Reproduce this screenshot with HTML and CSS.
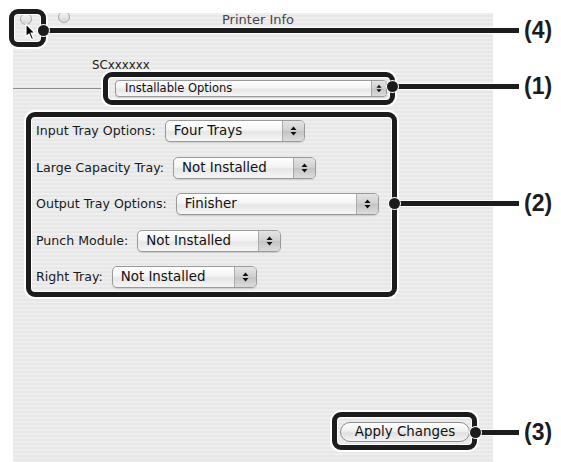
FILE: index.html
```html
<!DOCTYPE html>
<html>
<head>
<meta charset="utf-8">
<title>Printer Info</title>
<link rel="stylesheet" href="styles.css">
</head>
<body>
<div class="stage">
  <div class="window">
    <div class="titlebar">
      <span class="light"></span>
      <span class="light light-2"></span>
      <span class="title">Printer Info</span>
    </div>
    <div class="printer-name">SCxxxxxx</div>
    <div class="panel-row">
      <span class="separator"></span>
      <div class="popup popup-small">
        <span class="popup-text">Installable Options</span>
        <span class="arrows"><svg width="7" height="10" viewBox="0 0 7 10"><polygon points="0.5,4 3.5,0.5 6.5,4"/><polygon points="0.5,6 3.5,9.5 6.5,6"/></svg></span>
      </div>
    </div>
    <div class="options">
      <div class="opt-row">
        <span class="opt-label">Input Tray Options:</span>
        <div class="popup w-140"><span class="popup-text">Four Trays</span><span class="arrows"><svg width="7" height="10" viewBox="0 0 7 10"><polygon points="0.5,4 3.5,0.5 6.5,4"/><polygon points="0.5,6 3.5,9.5 6.5,6"/></svg></span></div>
      </div>
      <div class="opt-row">
        <span class="opt-label">Large Capacity Tray:</span>
        <div class="popup w-143"><span class="popup-text">Not Installed</span><span class="arrows"><svg width="7" height="10" viewBox="0 0 7 10"><polygon points="0.5,4 3.5,0.5 6.5,4"/><polygon points="0.5,6 3.5,9.5 6.5,6"/></svg></span></div>
      </div>
      <div class="opt-row">
        <span class="opt-label">Output Tray Options:</span>
        <div class="popup w-203"><span class="popup-text">Finisher</span><span class="arrows"><svg width="7" height="10" viewBox="0 0 7 10"><polygon points="0.5,4 3.5,0.5 6.5,4"/><polygon points="0.5,6 3.5,9.5 6.5,6"/></svg></span></div>
      </div>
      <div class="opt-row">
        <span class="opt-label">Punch Module:</span>
        <div class="popup w-144"><span class="popup-text">Not Installed</span><span class="arrows"><svg width="7" height="10" viewBox="0 0 7 10"><polygon points="0.5,4 3.5,0.5 6.5,4"/><polygon points="0.5,6 3.5,9.5 6.5,6"/></svg></span></div>
      </div>
      <div class="opt-row">
        <span class="opt-label">Right Tray:</span>
        <div class="popup w-145"><span class="popup-text">Not Installed</span><span class="arrows"><svg width="7" height="10" viewBox="0 0 7 10"><polygon points="0.5,4 3.5,0.5 6.5,4"/><polygon points="0.5,6 3.5,9.5 6.5,6"/></svg></span></div>
      </div>
    </div>
    <div class="footer">
      <button class="apply">Apply Changes</button>
    </div>
  </div>

  <div class="leader leader-4"></div>
  <div class="leader leader-1"></div>
  <div class="leader leader-2"></div>
  <div class="leader leader-3"></div>

  <div class="callout-box box-4"></div>
  <div class="callout-box box-1"></div>
  <div class="callout-box box-2"></div>
  <div class="callout-box box-3"></div>

  <svg class="cursor" width="12" height="18" viewBox="0 0 12 18"><path d="M1 1 L1 14 L4 11 L6.5 16.5 L8.5 15.5 L6 10 L10 10 Z" fill="#000" stroke="#fff" stroke-width="1.2" stroke-linejoin="round"/></svg>

  <div class="dot dot-4"></div>
  <div class="dot dot-1"></div>
  <div class="dot dot-2"></div>
  <div class="dot dot-3"></div>

  <span class="label label-4">(4)</span>
  <span class="label label-1">(1)</span>
  <span class="label label-2">(2)</span>
  <span class="label label-3">(3)</span>
</div>
</body>
</html>
```
FILE: styles.css
```css
* { box-sizing: border-box; }
html, body { margin: 0; padding: 0; background: #fff; }
body { font-family: "DejaVu Sans", "Noto Sans", sans-serif; color: #1a1a1a; }

.stage {
  position: relative;
  width: 561px;
  height: 462px;
  overflow: hidden;
}

.window {
  margin: 13px 0 0 13px;
  width: 480px;
  height: 449px;
  display: flex;
  flex-direction: column;
  overflow: hidden;
  background: repeating-linear-gradient(to bottom, #eeeeee 0 2px, #e7e7e7 2px 4px);
}

.titlebar {
  height: 17px;
  display: flex;
  align-items: flex-start;
  flex: none;
}
.light {
  width: 12px;
  height: 12px;
  border-radius: 50%;
  border: 1px solid #a8a8a8;
  background: linear-gradient(#f4f4f4, #d8d8d8);
  margin: 0 0 0 7px;
  flex: none;
}
.light-2 { margin-left: 26px; margin-top: -2px; }
.title {
  margin: -1px 0 0 152px;
  font-size: 13px;
  color: #444;
  line-height: 16px;
  white-space: nowrap;
}

.printer-name {
  margin: 27px 0 0 79px;
  font-size: 11.8px;
  line-height: 16px;
  color: #222;
}

.panel-row {
  display: flex;
  align-items: center;
  margin-top: 7px;
}
.separator {
  width: 90px;
  height: 1px;
  background: #8e8e8e;
  margin-right: 12px;
}

.popup {
  display: flex;
  align-items: stretch;
  height: 22px;
  border: 1px solid #9a9a9a;
  border-radius: 5px;
  background: linear-gradient(#ffffff 0%, #f4f4f4 45%, #e6e6e6 55%, #f6f6f6 100%);
  box-shadow: 0 1px 1px rgba(0,0,0,0.12);
  overflow: hidden;
  flex: none;
}
.popup-text {
  flex: 1;
  padding-left: 8px;
  font-size: 13.4px;
  line-height: 20px;
  white-space: nowrap;
  color: #111;
}
.arrows {
  width: 22px;
  border-left: 1px solid #aaaaaa;
  background: linear-gradient(#e4e4e4 0%, #cfcfcf 50%, #c4c4c4 52%, #dcdcdc 100%);
  display: flex;
  align-items: center;
  justify-content: center;
}
.arrows svg { fill: #111; }

.popup-small {
  width: 272px;
  height: 17px;
  border-radius: 4px;
}
.popup-small .popup-text {
  font-size: 11.5px;
  line-height: 15px;
  padding-left: 9px;
}
.popup-small .arrows { width: 15px; }
.popup-small .arrows svg { width: 6px; height: 9px; }

.options {
  margin: 23px 0 0 23px;
  display: flex;
  flex-direction: column;
  gap: 14.5px;
}
.opt-row {
  display: flex;
  align-items: center;
  gap: 9px;
}
.opt-label {
  font-size: 12.6px;
  line-height: 22px;
  color: #1a1a1a;
  white-space: nowrap;
}
.w-140 { width: 140px; }
.w-143 { width: 143px; }
.w-203 { width: 203px; }
.w-144 { width: 144px; }
.w-145 { width: 145px; }

.footer {
  margin-top: auto;
  display: flex;
  justify-content: flex-end;
  padding: 0 23px 20px 0;
}
.apply {
  width: 130px;
  height: 20px;
  border: 1px solid #8c8c8c;
  border-radius: 10px;
  background: linear-gradient(#ffffff 0%, #f0f0f0 45%, #e0e0e0 55%, #f4f4f4 100%);
  font-family: "DejaVu Sans", "Noto Sans", sans-serif;
  font-size: 13.4px;
  color: #111;
  padding: 0;
  line-height: 18px;
}

/* callouts (overlay) */
.callout-box {
  position: absolute;
  border: 5px solid #1c1c1c;
  border-radius: 9px;
  box-shadow: 0 0 0 2px #fff, inset 0 0 0 1px #fff;
}
.box-4 { left: 9px; top: 9px; width: 37px; height: 38px; }
.box-1 { left: 103px; top: 72px; width: 292px; height: 33px; }
.box-2 { left: 26px; top: 112px; width: 371px; height: 185px; }
.box-3 { left: 332px; top: 412px; width: 145px; height: 38px; }

.leader {
  position: absolute;
  height: 5px;
  background: #1c1c1c;
  box-shadow: 0 0 0 1px #fff;
}
.leader-4 { left: 46px; width: 473px; top: 28px; }
.leader-1 { left: 395px; width: 124px; top: 84px; }
.leader-2 { left: 397px; width: 122px; top: 201px; }
.leader-3 { left: 477px; width: 42px; top: 430px; }

.dot {
  position: absolute;
  width: 11px;
  height: 11px;
  border-radius: 50%;
  background: #1c1c1c;
  box-shadow: 0 0 0 1px #fff;
}
.dot-4 { left: 38px; top: 25px; }
.dot-1 { left: 387px; top: 81px; }
.dot-2 { left: 389px; top: 198px; }
.dot-3 { left: 470px; top: 427px; }

.label {
  position: absolute;
  left: 524px;
  font-family: "Liberation Sans", Arial, sans-serif;
  font-weight: bold;
  font-size: 23px;
  line-height: 26px;
  color: #1c1c1c;
}
.label-4 { top: 17px; }
.label-1 { top: 73px; }
.label-2 { top: 190px; }
.label-3 { top: 419px; }

.cursor {
  position: absolute;
  left: 25px;
  top: 23px;
}
```
